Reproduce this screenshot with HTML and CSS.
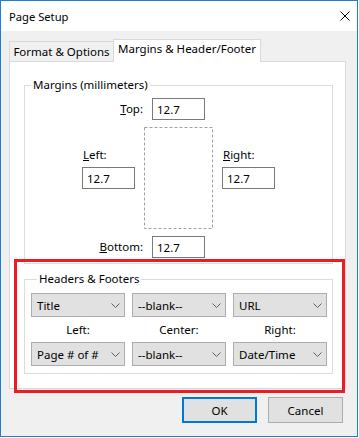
FILE: index.html
```html
<!DOCTYPE html>
<html lang="en">
<head>
  <meta charset="UTF-8" />
  <meta name="viewport" content="width=device-width, initial-scale=1.0" />
  <title>Page Setup</title>
  <link rel="stylesheet" href="styles.css">
</head>
<body>

  <div class="window">
    <div class="titlebar">
      <span class="title">Page Setup</span>
      <svg class="close" width="10" height="10" viewBox="0 0 10 10">
        <path d="M0.5 0.5 L9.5 9.5 M9.5 0.5 L0.5 9.5" stroke="#000" stroke-width="1" fill="none" />
      </svg>
    </div>

    <div class="content">
      <div class="tabs">
        <div class="tab">Format &amp; Options</div>
        <div class="tab active">Margins &amp; Header/Footer</div>
      </div>

      <div class="panel">
        <fieldset class="group margins">
          <legend>Margins (millimeters)</legend>
          <div class="margin-grid">
            <label class="edge-label top" for="mTop"><u>T</u>op:</label>
            <input class="num center top" id="mTop" type="text" value="12.7">

            <div class="side left">
              <label for="mLeft"><u>L</u>eft:</label>
              <input class="num" id="mLeft" type="text" value="12.7">
            </div>
            <svg class="page-outline" width="69" height="102" viewBox="0 0 69 102">
              <rect x="0.5" y="0.5" width="68" height="101" fill="none" stroke="#a0a0a0" stroke-dasharray="3 2" />
            </svg>
            <div class="side right">
              <label for="mRight"><u>R</u>ight:</label>
              <input class="num" id="mRight" type="text" value="12.7">
            </div>

            <label class="edge-label bottom" for="mBottom"><u>B</u>ottom:</label>
            <input class="num center bottom" id="mBottom" type="text" value="12.7">
          </div>
        </fieldset>

        <fieldset class="group hf">
          <legend>Headers &amp; Footers</legend>
          <div class="hf-grid">
            <div class="combo"><span>Title</span><svg width="9" height="5" viewBox="0 0 9 5"><path d="M0.5 0.5 L4.5 4.5 L8.5 0.5" stroke="#606060" fill="none" /></svg></div>
            <div class="combo"><span>--blank--</span><svg width="9" height="5" viewBox="0 0 9 5"><path d="M0.5 0.5 L4.5 4.5 L8.5 0.5" stroke="#606060" fill="none" /></svg></div>
            <div class="combo"><span>URL</span><svg width="9" height="5" viewBox="0 0 9 5"><path d="M0.5 0.5 L4.5 4.5 L8.5 0.5" stroke="#606060" fill="none" /></svg></div>

            <div class="col-label">Left:</div>
            <div class="col-label">Center:</div>
            <div class="col-label">Right:</div>

            <div class="combo"><span>Page # of #</span><svg width="9" height="5" viewBox="0 0 9 5"><path d="M0.5 0.5 L4.5 4.5 L8.5 0.5" stroke="#606060" fill="none" /></svg></div>
            <div class="combo"><span>--blank--</span><svg width="9" height="5" viewBox="0 0 9 5"><path d="M0.5 0.5 L4.5 4.5 L8.5 0.5" stroke="#606060" fill="none" /></svg></div>
            <div class="combo"><span>Date/Time</span><svg width="9" height="5" viewBox="0 0 9 5"><path d="M0.5 0.5 L4.5 4.5 L8.5 0.5" stroke="#606060" fill="none" /></svg></div>
          </div>
        </fieldset>
      </div>

      <div class="buttons">
        <button class="btn default">OK</button>
        <button class="btn">Cancel</button>
      </div>
    </div>

    <!-- annotation frame drawn over the dialog -->
    <div class="highlight"></div>
  </div>

</body>
</html>
```

FILE: styles.css
```css
body {
  margin: 0;
  padding: 0;
  background: #fff;
  font-family: "Noto Sans", sans-serif;
  font-size: 11.5px;
  color: #000;
}

.window {
  position: relative;
  width: 358px;
  height: 437px;
  box-sizing: border-box;
  border: 1px solid #1c7fd6;
  display: flex;
  flex-direction: column;
  background: #f0f0f0;
}

.titlebar {
  height: 30px;
  flex: 0 0 30px;
  background: #fff;
  display: flex;
  align-items: center;
  justify-content: space-between;
  padding: 0 7px 0 8px;
  font-size: 11.2px;
}

.close {
  display: block;
}

.content {
  padding: 8px 11px 0 8px;
}

.tabs {
  display: flex;
  align-items: flex-end;
  height: 22px;
  position: relative;
  z-index: 1;
}

.tab {
  box-sizing: border-box;
  height: 20px;
  width: 104px;
  border: 1px solid #d9d9d9;
  border-right: none;
  border-bottom: none;
  background: #f0f0f0;
  line-height: 16px;
  padding-top: 2px;
  text-align: center;
  white-space: nowrap;
}

.tab.active {
  width: 148px;
  height: 23px;
  margin-bottom: -1px;
  border-right: 1px solid #d9d9d9;
  background: #fff;
  padding-top: 1px;
}

.panel {
  background: #fff;
  border: 1px solid #d9d9d9;
  padding: 15px 12px 14px 14px;
}

.group {
  margin: 0;
  min-width: 0;
  border: 1px solid #dcdcdc;
  padding: 5px 0;
}

.group legend {
  margin-left: 6px;
  padding: 0 2px;
  line-height: 16px;
}

.margin-grid {
  display: grid;
  grid-template-columns: 62px 69px 62px;
  grid-template-rows: 22px 102px 22px;
  row-gap: 7px;
  justify-content: center;
}

.edge-label {
  grid-column: 1;
  justify-self: end;
  align-self: center;
  padding-right: 1px;
  line-height: 16px;
}

.edge-label.top,
.num.top {
  grid-row: 1;
}

.edge-label.bottom,
.num.bottom {
  grid-row: 3;
}

.num {
  box-sizing: border-box;
  width: 53px;
  height: 22px;
  margin: 0;
  border: 1px solid #7a7a7a;
  padding: 0 4px;
  font: inherit;
  color: #000;
  background: #fff;
  outline: none;
}

.num.center {
  grid-column: 2;
  justify-self: center;
}

.side {
  grid-row: 2;
  display: flex;
  flex-direction: column;
  align-items: flex-start;
  padding-top: 20px;
}

.side.left {
  grid-column: 1;
}

.side.right {
  grid-column: 3;
  align-items: flex-end;
}

.side label {
  line-height: 16px;
  margin: 0 0 4px 1px;
  align-self: flex-start;
}

.side.right label {
  margin-left: 10px;
}

.page-outline {
  grid-row: 2;
  grid-column: 2;
  display: block;
}

.hf {
  margin-top: 7px;
  padding: 6px 5px 7px 6px;
}

.hf-grid {
  display: grid;
  grid-template-columns: repeat(3, 94px);
  grid-template-rows: 24px 25px 24px;
  column-gap: 7px;
}

.combo {
  box-sizing: border-box;
  display: flex;
  align-items: center;
  justify-content: space-between;
  border: 1px solid #adadad;
  background: #e1e1e1;
  padding: 0 4px 0 5px;
  white-space: nowrap;
}

.combo svg {
  display: block;
}

.col-label {
  text-align: center;
  line-height: 25px;
}

.buttons {
  display: flex;
  justify-content: flex-end;
  gap: 11px;
  margin-top: 8px;
  padding-right: 3px;
}

.btn {
  box-sizing: border-box;
  width: 75px;
  height: 26px;
  margin: 0;
  border: 1px solid #adadad;
  background: #e1e1e1;
  font: inherit;
  color: #000;
  padding: 0;
}

.btn.default {
  border: 2px solid #0078d7;
}

.highlight {
  position: absolute;
  left: 13px;
  top: 258px;
  width: 331px;
  height: 134px;
  box-sizing: border-box;
  border: 3px solid #ed1c24;
  pointer-events: none;
}
```
